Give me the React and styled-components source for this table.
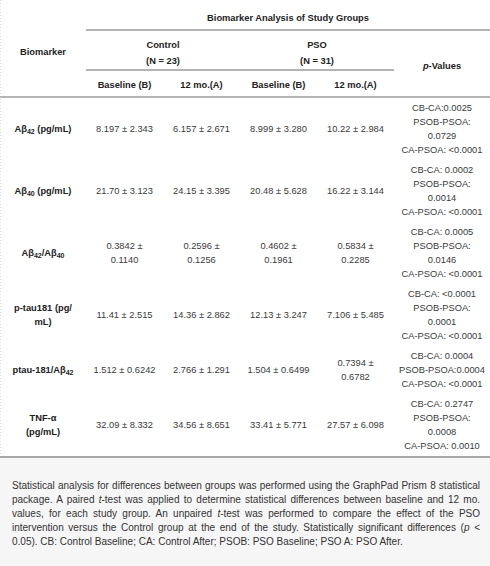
import React from 'react';
import styled, { createGlobalStyle } from 'styled-components';

const Global = createGlobalStyle`
  html, body { margin: 0; padding: 0; background: #fff; }
  body { font-family: "Liberation Sans", Arial, sans-serif; }
`;

const Page = styled.div`
  width: 490px;
  min-height: 566px;
  display: flex;
  flex-direction: column;
  background: repeating-linear-gradient(to bottom, #d3dbe0 0 1px, transparent 1px 3px) left top / 1px 458px no-repeat, #fff;
`;

const Table = styled.table`
  width: 490px;
  border-collapse: collapse;
  table-layout: fixed;
  font-size: 9.3px;
  color: #3a3a3a;
`;

const Th = styled.th`
  font-weight: bold;
  color: #222;
  text-align: center;
  vertical-align: middle;
  line-height: 16px;
  padding: ${p => p.$pad || '0 4px'};
  border-bottom: ${p => (p.$line ? '2px solid #b4b4b4' : 'none')};
`;

const Td = styled.td`
  text-align: center;
  vertical-align: middle;
  line-height: 14px;
  padding: 3px 3px;
  white-space: nowrap;
  border-bottom: ${p => (p.$last ? '2px solid #a8a8a8' : 'none')};
`;

const Label = styled(Td)`
  font-weight: bold;
  color: #222;
`;

const Sub = styled.sub`
  font-size: 7px;
  vertical-align: -2px;
  line-height: 0;
`;

const Note = styled.div`
  flex: 1;
  background: #f6f6f6;
  padding: 21px 10px 12px 12px;
  font-size: 10px;
  line-height: 14px;
  color: #333;
`;

const NoteLine = styled.div`
  white-space: nowrap;
  text-align: ${p => (p.$last ? 'left' : 'justify')};
  text-align-last: ${p => (p.$last ? 'left' : 'justify')};
`;

const Ab = ({ n }) => (
  <>
    Aβ<Sub>{n}</Sub>
  </>
);

const Lines = ({ items }) =>
  items.map((t, i) => (
    <React.Fragment key={i}>
      {i > 0 && <br />}
      {t}
    </React.Fragment>
  ));

const rows = [
  {
    label: [<><Ab n="42" /> (pg/mL)</>],
    vals: [['8.197 ± 2.343'], ['6.157 ± 2.671'], ['8.999 ± 3.280'], ['10.22 ± 2.984']],
    p: ['CB-CA:0.0025', 'PSOB-PSOA:', '0.0729', 'CA-PSOA: <0.0001'],
  },
  {
    label: [<><Ab n="40" /> (pg/mL)</>],
    vals: [['21.70 ± 3.123'], ['24.15 ± 3.395'], ['20.48 ± 5.628'], ['16.22 ± 3.144']],
    p: ['CB-CA: 0.0002', 'PSOB-PSOA:', '0.0014', 'CA-PSOA: <0.0001'],
  },
  {
    label: [<><Ab n="42" />/<Ab n="40" /></>],
    vals: [['0.3842 ±', '0.1140'], ['0.2596 ±', '0.1256'], ['0.4602 ±', '0.1961'], ['0.5834 ±', '0.2285']],
    p: ['CB-CA: 0.0005', 'PSOB-PSOA:', '0.0146', 'CA-PSOA: <0.0001'],
  },
  {
    label: ['p-tau181 (pg/', 'mL)'],
    vals: [['11.41 ± 2.515'], ['14.36 ± 2.862'], ['12.13 ± 3.247'], ['7.106 ± 5.485']],
    p: ['CB-CA: <0.0001', 'PSOB-PSOA:', '0.0001', 'CA-PSOA: <0.0001'],
  },
  {
    label: [<>ptau-181/<Ab n="42" /></>],
    vals: [['1.512 ± 0.6242'], ['2.766 ± 1.291'], ['1.504 ± 0.6499'], ['0.7394 ±', '0.6782']],
    p: ['CB-CA: 0.0004', 'PSOB-PSOA:0.0004', 'CA-PSOA: <0.0001'],
  },
  {
    label: ['TNF-α', '(pg/mL)'],
    vals: [['32.09 ± 8.332'], ['34.56 ± 8.651'], ['33.41 ± 5.771'], ['27.57 ± 6.098']],
    p: ['CB-CA: 0.2747', 'PSOB-PSOA:', '0.0008', 'CA-PSOA: 0.0010'],
  },
];

const noteLines = [
  <>Statistical analysis for differences between groups was performed using the GraphPad Prism 8 statistical</>,
  <>package. A paired <i>t</i>-test was applied to determine statistical differences between baseline and 12 mo.</>,
  <>values, for each study group. An unpaired <i>t</i>-test was performed to compare the effect of the PSO</>,
  <>intervention versus the Control group at the end of the study. Statistically significant differences (<i>p</i> &lt;</>,
  <>0.05). CB: Control Baseline; CA: Control After; PSOB: PSO Baseline; PSO A: PSO After.</>,
];

export default function App() {
  return (
    <>
      <Global />
      <Page>
        <Table>
          <colgroup>
            <col style={{ width: 86 }} />
            <col style={{ width: 77 }} />
            <col style={{ width: 77 }} />
            <col style={{ width: 77 }} />
            <col style={{ width: 77 }} />
            <col style={{ width: 96 }} />
          </colgroup>
          <thead>
            <tr>
              <Th rowSpan={3} $line $pad="8px 4px 0">Biomarker</Th>
              <Th colSpan={5} $line $pad="10px 4px 3px">Biomarker Analysis of Study Groups</Th>
            </tr>
            <tr>
              <Th colSpan={2} $line $pad="6px 4px 0">Control<br />(N = 23)</Th>
              <Th colSpan={2} $line $pad="6px 4px 0">PSO<br />(N = 31)</Th>
              <Th rowSpan={2} $line $pad="4px 4px 0"><i>p</i>-Values</Th>
            </tr>
            <tr>
              <Th $line $pad="6px 2px 3px">Baseline (B)</Th>
              <Th $line $pad="6px 2px 3px">12 mo.(A)</Th>
              <Th $line $pad="6px 2px 3px">Baseline (B)</Th>
              <Th $line $pad="6px 2px 3px">12 mo.(A)</Th>
            </tr>
          </thead>
          <tbody>
            {rows.map((r, i) => {
              const last = i === rows.length - 1;
              return (
                <tr key={i}>
                  <Label $last={last}><Lines items={r.label} /></Label>
                  {r.vals.map((v, j) => (
                    <Td key={j} $last={last}><Lines items={v} /></Td>
                  ))}
                  <Td $last={last}><Lines items={r.p} /></Td>
                </tr>
              );
            })}
          </tbody>
        </Table>
        <Note>
          {noteLines.map((l, i) => (
            <NoteLine key={i} $last={i === noteLines.length - 1}>{l}</NoteLine>
          ))}
        </Note>
      </Page>
    </>
  );
}
